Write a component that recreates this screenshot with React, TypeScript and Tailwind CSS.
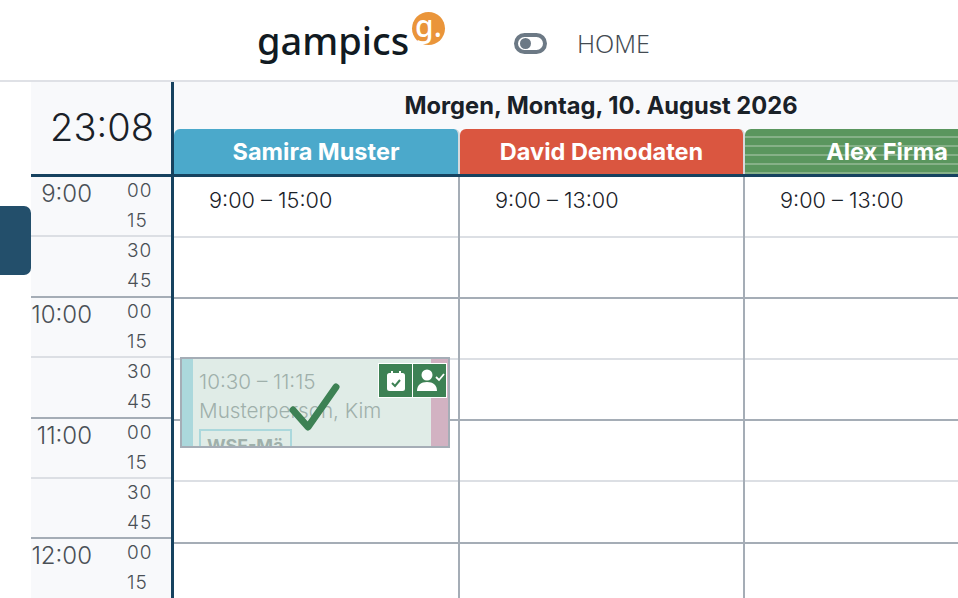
const hours = ["9:00", "10:00", "11:00", "12:00"];
const minutes = ["00", "15", "30", "45"];

const doctors = [
  { name: "Samira Muster", color: "bg-[#4ba9cb]", hours: "9:00 – 15:00" },
  { name: "David Demodaten", color: "bg-[#da5640]", hours: "9:00 – 13:00" },
  {
    name: "Alex Firma",
    color: "bg-[repeating-linear-gradient(180deg,#5a965e_0px,#5a965e_7px,#86b188_7px,#86b188_9px)]",
    hours: "9:00 – 13:00",
  },
];

function Logo() {
  return (
    <div className="relative w-[188px] h-[60px]">
      <span className="absolute left-0 top-[5px] text-[38px] leading-[50px] font-medium text-[#111a22] font-['Noto_Sans',sans-serif]">
        gampics
      </span>
      <span className="absolute left-[155px] top-[2px] w-[33px] h-[33px] rounded-full bg-[#ea953a] text-white text-[30px] leading-[28px] font-medium text-center font-['Noto_Sans',sans-serif]">
        g.
      </span>
    </div>
  );
}

function HourRows() {
  return (
    <>
      {hours.map((h) => (
        <div key={h} className="h-[122.2px] shrink-0 border-b-2 border-[#a5adb6]">
          <div className="h-[61.1px] border-b-2 border-[#dcdfe4]" />
        </div>
      ))}
    </>
  );
}

export default function App() {
  return (
    <div className="w-[958px] h-[598px] overflow-hidden bg-white font-['Inter',sans-serif] relative">
      <header className="h-[82px] border-b-2 border-[#dfe1e6] flex items-center pl-[257px]">
        <Logo />
        <div className="ml-[69px] mt-[7px] w-[33px] h-[21px] rounded-full border-[4px] border-[#6c7985] flex items-center pl-[2px]">
          <div className="w-[11px] h-[11px] rounded-full bg-[#6c7985]" />
        </div>
        <span className="ml-[30px] mt-[8px] text-[25px] text-[#444b52] font-['Noto_Sans',sans-serif] font-light">HOME</span>
      </header>

      <div className="pl-[31px] flex">
        {/* Zeitspalte */}
        <div className="w-[143px] shrink-0 border-r-[3px] border-[#16425f] bg-[#f8f9fb]">
          <div className="h-[95px] border-b-[3px] border-[#16425f] flex items-center justify-center pl-[2px] pb-[2px] text-[38px] font-light text-[#1a2128]">
            23:08
          </div>
          {hours.map((h) => (
            <div key={h} className="h-[120.8px] border-b-2 border-[#a5adb6] relative text-[#4a5056]">
              <span className="absolute top-[3px] right-[79px] w-[70px] text-right text-[24px] leading-[28px] font-light">{h}</span>
              <div className="h-[60.4px] border-b-2 border-[#dcdfe4] flex flex-col pl-[96px] text-[19px] leading-[30px] tracking-[1px] font-light">
                <span className="-mt-[1px]">{minutes[0]}</span>
                <span>{minutes[1]}</span>
              </div>
              <div className="flex flex-col pl-[96px] text-[19px] leading-[30px] tracking-[1px] font-light">
                <span className="-mt-[1px]">{minutes[2]}</span>
                <span>{minutes[3]}</span>
              </div>
            </div>
          ))}
        </div>

        {/* Tagesspalten */}
        <div className="flex-1 min-w-0">
          <div className="h-[95px] bg-[#f8f9fb] border-b-[3px] border-[#16425f] flex flex-col">
            <div className="h-[47px] flex items-center justify-center pl-[70px] text-[23.7px] font-bold text-[#1a2128] whitespace-nowrap">
              Morgen, Montag, 10. August 2026
            </div>
            <div className="flex-1 grid grid-cols-[286px_285px_286px]">
              {doctors.map((d) => (
                <div
                  key={d.name}
                  className={`${d.color} rounded-t-[6px] border-r-2 border-[#d5d9dd] flex items-center justify-center pt-[1px] text-white font-bold text-[23.5px] whitespace-nowrap`}
                >
                  {d.name}
                </div>
              ))}
            </div>
          </div>
          <div className="grid grid-cols-[286px_285px_286px]">
            {doctors.map((d) => (
              <div key={d.name} className="relative border-r-2 border-[#a5adb6] flex flex-col">
                <span className="absolute left-[35px] top-[9px] text-[21.7px] leading-[28px] font-light text-[#1a2128] whitespace-nowrap">{d.hours}</span>
                <HourRows />
              </div>
            ))}
          </div>
        </div>
      </div>

      {/* Seitenleisten-Griff */}
      <div className="absolute left-0 top-[206px] w-[31px] h-[69px] rounded-r-[7px] bg-[#234f6b]" />

      {/* Termin */}
      <div className="absolute left-[180px] top-[357px] w-[270px] h-[91px] border-2 border-[#a5adb6] bg-[#e0ece7] overflow-hidden flex">
        <div className="w-[11px] shrink-0 bg-[#abd8dc]" />
        <div className="flex-1 pl-[6px] pt-[8px] text-[#9fb0ab] text-[20.7px] leading-[29px] font-light whitespace-nowrap">
          <div>10:30 – 11:15</div>
          <div>Musterperson, Kim</div>
          <div className="mt-[4px] w-[93px] h-[40px] border-2 border-[#abd8dc] pl-[6px] text-[18px] font-bold">WSF-Mä</div>
        </div>
        <div className="w-[17px] shrink-0 bg-[#d2b2c2]" />
        <div className="absolute right-[1px] top-[4px] flex gap-px bg-white p-px">
          <div className="w-[33px] h-[33px] bg-[#3d8154] flex items-center justify-center">
            <svg viewBox="0 0 24 24" className="w-[24px] h-[24px]">
              <path d="M3 6.500A2.500 2.500 0 0 1 5.500 4H7V2h2v2h6V2h2v2h1.500A2.500 2.500 0 0 1 21 6.500v13a2.500 2.500 0 0 1-2.500 2.500h-13A2.500 2.500 0 0 1 3 19.500z" fill="white" />
              <path d="M8 14l3 3 5-6" fill="none" stroke="#3d8154" strokeWidth="2" />
            </svg>
          </div>
          <div className="w-[33px] h-[33px] bg-[#3d8154] flex items-center justify-center">
            <svg viewBox="0 0 30 30" className="w-[30px] h-[30px]" fill="white">
              <circle cx="12" cy="9" r="5.500" />
              <path d="M2 25c0-6 4-9 10-9s10 3 10 9z" />
              <path d="M21 11l3 3 5-6" fill="none" stroke="white" strokeWidth="1.800" />
            </svg>
          </div>
        </div>
        <svg viewBox="0 0 52 50" className="absolute left-[106px] top-[23px] w-[52px] h-[50px]" fill="none" stroke="#3d8154" strokeWidth="7" strokeLinecap="round" strokeLinejoin="round">
          <path d="M5 28l15 17L48 5" />
        </svg>
      </div>
    </div>
  );
}
